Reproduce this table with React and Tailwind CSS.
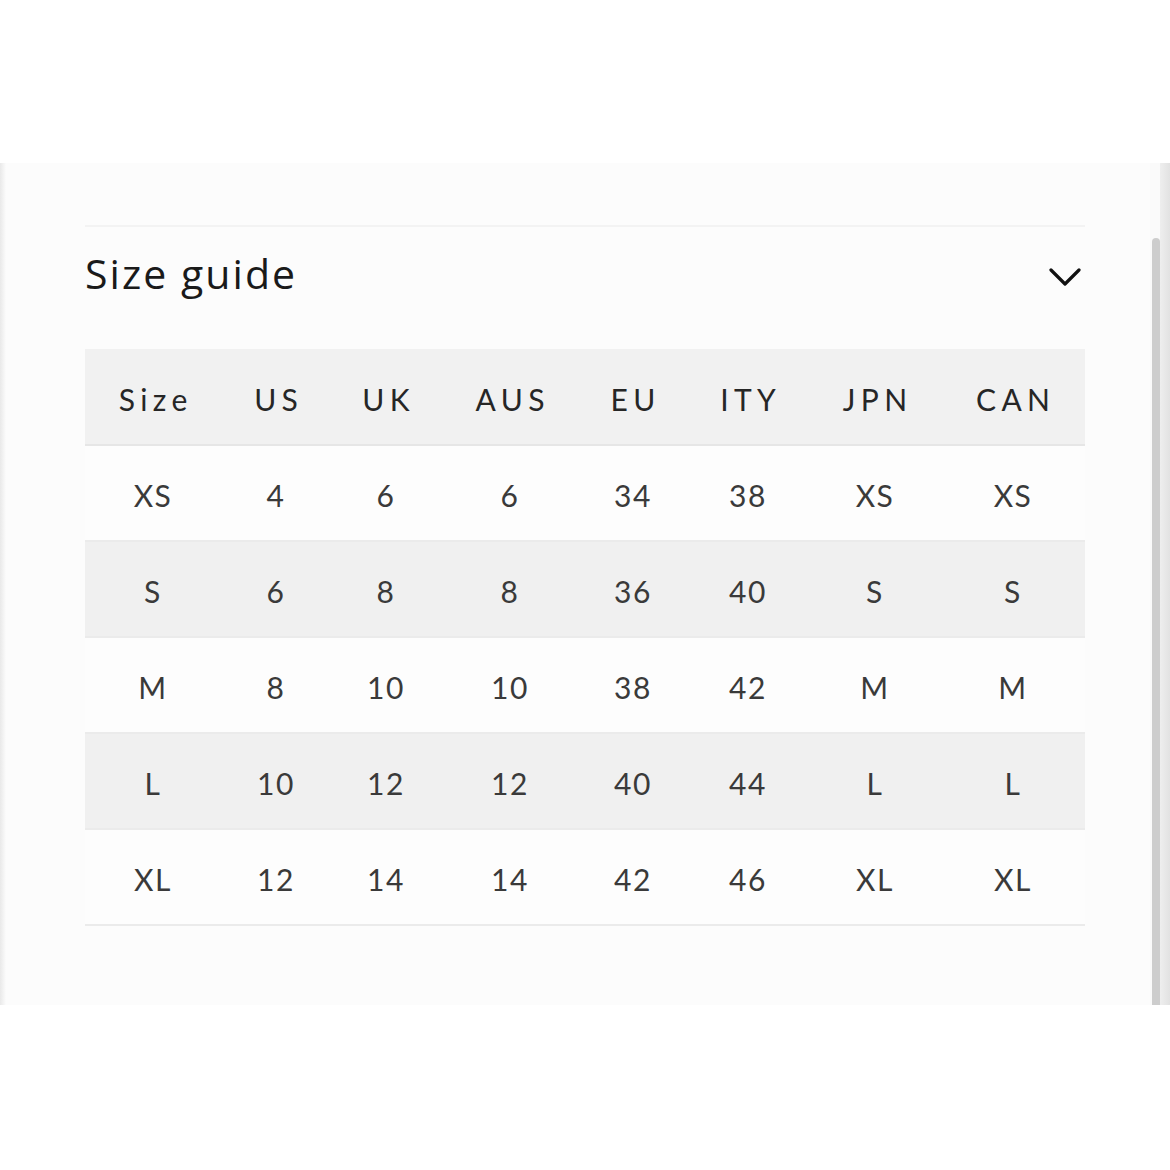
const headers = ['Size', 'US', 'UK', 'AUS', 'EU', 'ITY', 'JPN', 'CAN'];

const rows = [
  ['XS', '4', '6', '6', '34', '38', 'XS', 'XS'],
  ['S', '6', '8', '8', '36', '40', 'S', 'S'],
  ['M', '8', '10', '10', '38', '42', 'M', 'M'],
  ['L', '10', '12', '12', '40', '44', 'L', 'L'],
  ['XL', '12', '14', '14', '42', '46', 'XL', 'XL'],
];

// column widths read off the screenshot (total 1000px)
const cols = 'grid grid-cols-[136px_110px_110px_138px_108px_122px_132px_144px]';

function Chevron() {
  return (
    <svg width="32" height="20" viewBox="0 0 32 20" fill="none">
      <polyline
        points="2,3 16,17 30,3"
        stroke="#111"
        strokeWidth="3.2"
        strokeLinecap="round"
        strokeLinejoin="round"
      />
    </svg>
  );
}

export default function App() {
  return (
    <div className="w-[1170px] h-[1170px] bg-white overflow-hidden">
      <div className="h-[163px]" />
      <div className="flex h-[842px] bg-[#fcfcfc]">
        <div className="w-[6px] bg-gradient-to-r from-[#e9e9e9] to-[#fcfcfc]" />

        <div className="w-[1000px] ml-[79px] flex flex-col">
          <div className="mt-[62px] h-[2px] bg-[#f3f3f3]" />

          <div className="h-[96px] flex items-center justify-between">
            <h2 className="text-[41px] leading-none tracking-[0.05em] text-[#1a1a1a] font-['Open_Sans',sans-serif] -mt-[4px]">
              Size guide
            </h2>
            <div className="mr-[4px] mt-[4px]">
              <Chevron />
            </div>
          </div>

          <div className="mt-[26px] font-['Lato',sans-serif]">
            <div className={`${cols} h-[97px] items-center bg-[#f1f1f1] border-b-2 border-[#e6e6e6] text-[#262626]`}>
              {headers.map((h) => (
                <div key={h} className="text-center text-[30px] tracking-[0.18em] pl-[0.18em] pt-[6px]">
                  {h}
                </div>
              ))}
            </div>
            {rows.map((r, i) => (
              <div
                key={r[0]}
                className={`${cols} h-[96px] items-center border-b-2 border-[#ebebeb] text-[#3a3a3a] ${
                  i % 2 === 1 ? 'bg-[#f0f0f0]' : 'bg-[#fdfdfd]'
                }`}
              >
                {r.map((c, j) => (
                  <div key={j} className="text-center text-[30px] tracking-[0.05em] pt-[5px]">
                    {c}
                  </div>
                ))}
              </div>
            ))}
          </div>
        </div>

        <div className="ml-[65px] w-[20px] flex bg-[#fafafa]">
          <div className="w-[2px]" />
          <div className="w-[8px] flex flex-col">
            <div className="h-[75px]" />
            <div className="flex-1 rounded-t-[4px] bg-[#cdcdcd]" />
          </div>
          <div className="flex-1 bg-gradient-to-r from-[#eeeeee] to-[#e2e2e2]" />
        </div>
      </div>
    </div>
  );
}
